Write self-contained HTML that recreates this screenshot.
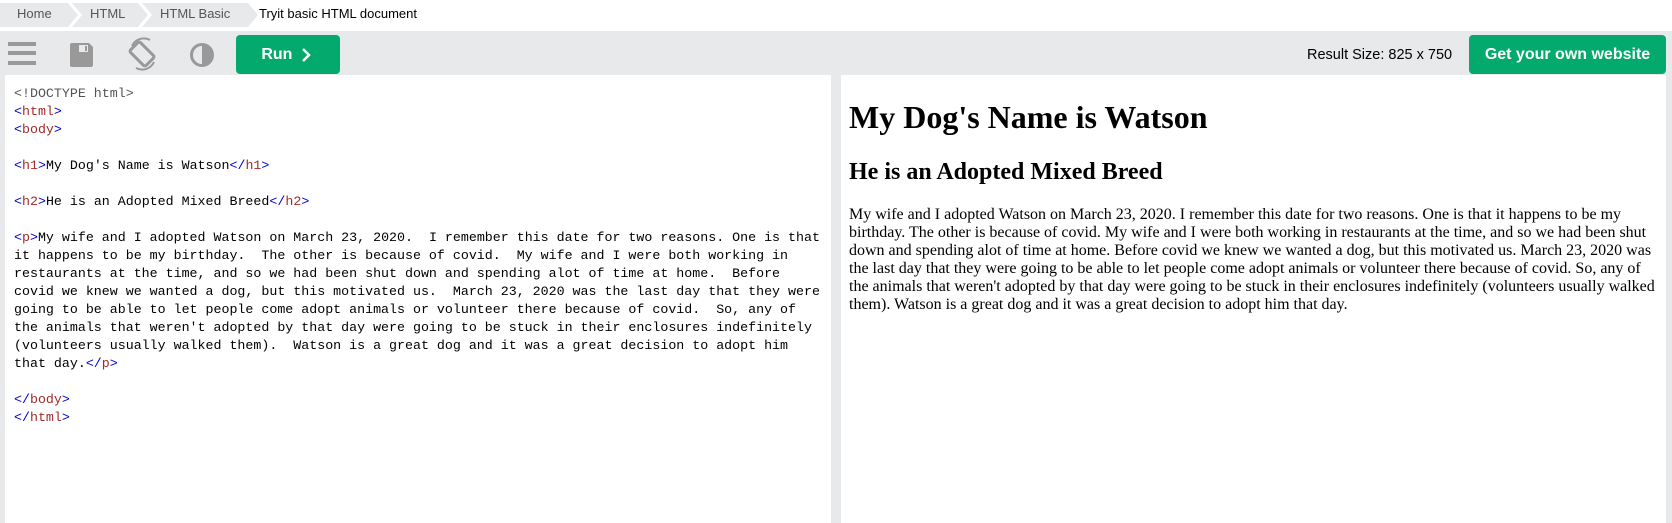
<!DOCTYPE html>
<html><head><style>
*{margin:0;padding:0;box-sizing:border-box}
body{width:1672px;height:523px;overflow:hidden;background:#e7e9eb;font-family:"Liberation Sans",sans-serif;position:relative}
.top{position:absolute;left:0;top:0;width:1672px;height:31px;background:#fff}
.bc{position:absolute;top:6px;font-size:13px;color:#555}
.btn{position:absolute;top:35px;height:39px;background:#04aa6d;color:#fff;border-radius:4px;font-weight:bold;font-size:16px;line-height:39px;text-align:center}
.panel{position:absolute;top:75px;height:448px;background:#fff}
pre{position:absolute;left:14px;top:85px;font-family:"Liberation Mono",monospace;font-size:13.3px;line-height:18px;color:#000}
.t{color:#a52a2a}.b{color:#0000cd}.g{color:#555}
.r{position:absolute;left:849px;font-family:"Liberation Serif",serif;color:#000}
</style></head><body>
<div class="top">
<svg width="270" height="31" style="position:absolute;left:0;top:0">
<polygon points="0,3 68,3 78,15 68,27 0,27" fill="#e7e9eb"/>
<polygon points="72,3 138,3 148,15 138,27 72,27 82,15" fill="#e7e9eb"/>
<polygon points="142,3 248,3 258,15 248,27 142,27 152,15" fill="#e7e9eb"/>
</svg>
<span class="bc" style="left:17px">Home</span>
<span class="bc" style="left:90px">HTML</span>
<span class="bc" style="left:160px">HTML Basic</span>
<span class="bc" style="left:259px;color:#000">Tryit basic HTML document</span>
</div>
<svg width="220" height="40" style="position:absolute;left:0;top:36px">
<rect x="8" y="6" width="28" height="4" fill="#999"/><rect x="8" y="15" width="28" height="4" fill="#999"/><rect x="8" y="25" width="28" height="4" fill="#999"/>
<path d="M72 7h17l4 4v18a2 2 0 0 1-2 2H72a2 2 0 0 1-2-2V9a2 2 0 0 1 2-2z" fill="#999"/><rect x="79" y="9" width="9" height="7" fill="#e7e9eb"/><rect x="85" y="10" width="2" height="5" fill="#999"/>
<g transform="translate(142,18) rotate(-45)"><rect x="-7" y="-11" width="14" height="22" rx="2" fill="none" stroke="#999" stroke-width="3"/></g>
<path d="M132 10a13 13 0 0 1 18-6M154 26a13 13 0 0 1-18 6" fill="none" stroke="#999" stroke-width="2"/>
<circle cx="202" cy="19" r="10.5" fill="none" stroke="#999" stroke-width="3"/><path d="M202 8.5a10.5 10.5 0 0 1 0 21z" fill="#999"/>
</svg>
<div class="btn" style="left:236px;width:104px">Run&nbsp;&nbsp;&nbsp;&nbsp;&nbsp;<svg width="10" height="14" style="position:absolute;left:65px;top:13px"><path d="M2 1l6 6-6 6" fill="none" stroke="#fff" stroke-width="2.5"/></svg></div>
<span style="position:absolute;left:1307px;top:47px;font-size:14.5px;color:#000">Result Size: 825 x 750</span>
<div class="btn" style="left:1469px;width:197px">Get your own website</div>
<div class="panel" style="left:5px;width:826px"></div>
<div class="panel" style="left:841px;width:825px"></div>
<pre><span class="g">&lt;!DOCTYPE html&gt;</span>
<span class="b">&lt;</span><span class="t">html</span><span class="b">&gt;</span>
<span class="b">&lt;</span><span class="t">body</span><span class="b">&gt;</span>

<span class="b">&lt;</span><span class="t">h1</span><span class="b">&gt;</span>My Dog's Name is Watson<span class="b">&lt;/</span><span class="t">h1</span><span class="b">&gt;</span>

<span class="b">&lt;</span><span class="t">h2</span><span class="b">&gt;</span>He is an Adopted Mixed Breed<span class="b">&lt;/</span><span class="t">h2</span><span class="b">&gt;</span>

<span class="b">&lt;</span><span class="t">p</span><span class="b">&gt;</span>My wife and I adopted Watson on March 23, 2020.  I remember this date for two reasons. One is that
it happens to be my birthday.  The other is because of covid.  My wife and I were both working in
restaurants at the time, and so we had been shut down and spending alot of time at home.  Before
covid we knew we wanted a dog, but this motivated us.  March 23, 2020 was the last day that they were
going to be able to let people come adopt animals or volunteer there because of covid.  So, any of
the animals that weren't adopted by that day were going to be stuck in their enclosures indefinitely
(volunteers usually walked them).  Watson is a great dog and it was a great decision to adopt him
that day.<span class="b">&lt;/</span><span class="t">p</span><span class="b">&gt;</span>

<span class="b">&lt;/</span><span class="t">body</span><span class="b">&gt;</span>
<span class="b">&lt;/</span><span class="t">html</span><span class="b">&gt;</span></pre>
<div class="r" style="top:97px;font-size:32px;font-weight:bold;line-height:40px">My Dog's Name is Watson</div>
<div class="r" style="top:157px;font-size:24px;font-weight:bold;line-height:30px">He is an Adopted Mixed Breed</div>
<div class="r" style="top:206px;width:810px;font-size:16px;line-height:18px">My wife and I adopted Watson on March 23, 2020. I remember this date for two reasons. One is that it happens to be my birthday. The other is because of covid. My wife and I were both working in restaurants at the time, and so we had been shut down and spending alot of time at home. Before covid we knew we wanted a dog, but this motivated us. March 23, 2020 was the last day that they were going to be able to let people come adopt animals or volunteer there because of covid. So, any of the animals that weren't adopted by that day were going to be stuck in their enclosures indefinitely (volunteers usually walked them). Watson is a great dog and it was a great decision to adopt him that day.</div>
</body></html>
